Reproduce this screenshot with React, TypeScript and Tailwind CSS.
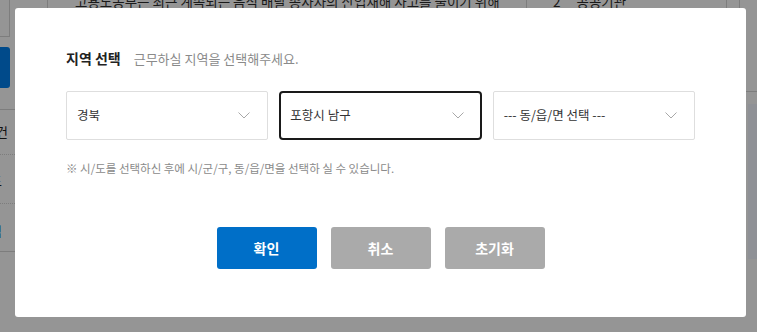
import React from 'react'

const font = { fontFamily: '"Noto Sans CJK KR", "Noto Sans", sans-serif' }

function Chevron() {
  return (
    <svg width="12" height="7" viewBox="0 0 12 7" fill="none" className="shrink-0">
      <path d="M0.5 0.5 L6 6 L11.5 0.5" stroke="#a8a8a8" strokeWidth="1" />
    </svg>
  )
}

function Select({ label, active }: { label: string; active?: boolean }) {
  return (
    <div
      className={`flex h-[49px] items-center justify-between bg-white text-[12.5px] text-[#333] ${
        active
          ? 'rounded-[4px] border-2 border-[#1a1a1a] pl-[9px] pr-[16px]'
          : 'rounded-[2px] border border-[#dedede] pl-[10px] pr-[17px]'
      }`}
    >
      <span>{label}</span>
      <Chevron />
    </div>
  )
}

export default function App() {
  return (
    <div className="relative h-[332px] w-[757px] overflow-hidden bg-[#959595]" style={font}>
      {/* dimmed page behind the modal */}
      <div className="flex h-full">
        <div className="flex w-[15px] shrink-0 flex-col">
          <div className="h-[37px] w-[10px] border-r border-b border-[#7d7d7d]" />
          <div className="mt-[10px] h-[41px] w-[10px] rounded-r-[3px] bg-[#004a8a]" />
          <div className="mt-[21px] h-px w-full bg-[#7d7d7d]" />
          <div className="-ml-[4px] mt-[14px] text-[13px] leading-[16px] text-[#111]">건</div>
          <div className="mt-[14px] w-full border-t border-dotted border-[#7d7d7d]" />
          <div className="-ml-[10px] mt-[18px] text-[13px] leading-[16px] text-[#111]">도</div>
          <div className="mt-[14px] w-full border-t border-dotted border-[#7d7d7d]" />
          <div className="-ml-[10px] mt-[19px] text-[13px] leading-[16px] text-[#00306a]">림</div>
          <div className="mt-[12px] h-px w-full bg-[#7d7d7d]" />
        </div>
        <div className="flex w-[731px] shrink-0 flex-col">
          <div className="flex h-[8px] text-[13.5px] leading-[18px] text-[#1a1a1a]">
            <div className="w-[33px] shrink-0 border-r border-[#7d7d7d]" />
            <div className="w-[479px] shrink-0 border-r border-[#7d7d7d] pl-[27px]">
              <div className="-mt-[8px] whitespace-nowrap">고용노동부는 최근 계속되는 음식 배달 종사자의 산업재해 사고를 줄이기 위해</div>
            </div>
            <div className="flex w-[200px] shrink-0 gap-[16px] border-r border-[#7d7d7d] pl-[26px]">
              <div className="-mt-[8px]">2</div>
              <div className="-mt-[8px] whitespace-nowrap">공공기관</div>
            </div>
            <div className="w-[13px] shrink-0 border-r border-[#7d7d7d]" />
          </div>
        </div>
        <div className="flex w-[11px] shrink-0 flex-col">
          <div className="mt-[91px] h-px w-full bg-[#7d7d7d]" />
          <div className="ml-[2px] mt-[12px] h-[155px] bg-[#8f9196]" />
        </div>
      </div>

      {/* modal */}
      <div className="absolute left-[15px] top-[8px] h-[309px] w-[731px] rounded-[3px] bg-white px-[51px] pt-[40px]">
        <div className="flex items-baseline gap-[13px]">
          <span className="text-[14px] font-bold leading-[20px] text-[#222]">지역 선택</span>
          <span className="text-[13px] leading-[20px] text-[#8a8a8a]">근무하실 지역을 선택해주세요.</span>
        </div>
        <div className="mt-[22px] grid grid-cols-3 gap-[11px]">
          <Select label="경북" />
          <Select label="포항시 남구" active />
          <Select label="--- 동/읍/면 선택 ---" />
        </div>
        <p className="mt-[20px] text-[11.5px] leading-[16px] text-[#8a8a8a]">
          ※ 시/도를 선택하신 후에 시/군/구, 동/읍/면을 선택하 실 수 있습니다.
        </p>
        <div className="mt-[51px] flex justify-center gap-[14px]">
          <button className="h-[42px] w-[100px] rounded-[3px] bg-[#006fc8] text-[14px] font-bold text-white">확인</button>
          <button className="h-[42px] w-[100px] rounded-[3px] bg-[#aaaaaa] text-[14px] font-bold text-white">취소</button>
          <button className="h-[42px] w-[100px] rounded-[3px] bg-[#aaaaaa] text-[14px] font-bold text-white">초기화</button>
        </div>
      </div>
    </div>
  )
}
